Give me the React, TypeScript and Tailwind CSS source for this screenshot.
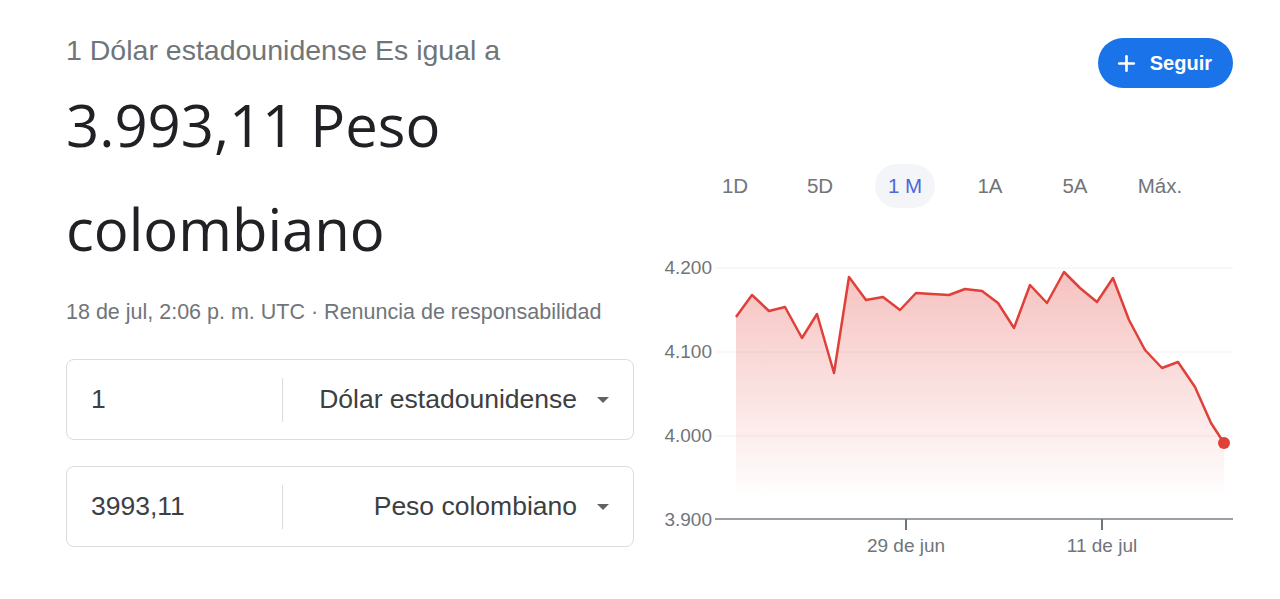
import { Plus } from "lucide-react";

const points: [number, number][] = [
  [736, 317], [752, 295], [769, 311], [785, 307], [802, 338], [817, 314],
  [834, 373], [849, 277], [866, 300], [883, 297], [900, 310], [916, 293],
  [932, 294], [949, 295], [965, 289], [982, 291], [998, 303], [1014, 328],
  [1030, 285], [1047, 303], [1064, 272], [1080, 288], [1097, 302], [1113, 278],
  [1129, 320], [1145, 350], [1162, 368], [1178, 362], [1195, 387], [1211, 423],
  [1224, 443],
];

const ranges = ["1D", "5D", "1 M", "1A", "5A", "Máx."];

const axisFont = "Liberation Sans, Arial, sans-serif";

function Chart() {
  const line = points.map(([x, y], i) => `${i ? "L" : "M"}${x} ${y}`).join(" ");
  const area = `${line} L1224 500 L736 500 Z`;
  const grid = [
    { y: 268, label: "4.200" },
    { y: 352, label: "4.100" },
    { y: 436, label: "4.000" },
  ];

  return (
    <svg width="580" height="310" viewBox="655 255 580 310" className="block">
      <defs>
        <linearGradient id="fill" x1="0" y1="0" x2="0" y2="1">
          <stop offset="0%" stopColor="#e0403a" stopOpacity="0.32" />
          <stop offset="100%" stopColor="#e0403a" stopOpacity="0" />
        </linearGradient>
      </defs>
      {grid.map((g) => (
        <g key={g.label}>
          <line x1="715" x2="1233" y1={g.y} y2={g.y} stroke="#f1f1f1" strokeWidth="1" />
          <text x="712" y={g.y + 6} textAnchor="end" fontSize="19" fill="#70757a" fontFamily={axisFont}>
            {g.label}
          </text>
        </g>
      ))}
      <path d={area} fill="url(#fill)" />
      <path d={line} fill="none" stroke="#e0403a" strokeWidth="2.5" strokeLinejoin="round" />
      <circle cx="1224" cy="443" r="6" fill="#e0403a" />
      <line x1="715" x2="1233" y1="519" y2="519" stroke="#9aa0a6" strokeWidth="2" />
      <text x="712" y="526" textAnchor="end" fontSize="19" fill="#70757a" fontFamily={axisFont}>
        3.900
      </text>
      {[
        { x: 906, label: "29 de jun" },
        { x: 1102, label: "11 de jul" },
      ].map((t) => (
        <g key={t.label}>
          <line x1={t.x} x2={t.x} y1="519" y2="530" stroke="#70757a" strokeWidth="2" />
          <text x={t.x} y="552" textAnchor="middle" fontSize="19" fill="#70757a" fontFamily={axisFont}>
            {t.label}
          </text>
        </g>
      ))}
    </svg>
  );
}

function CurrencyBox({ amount, currency }: { amount: string; currency: string }) {
  return (
    <div className="flex h-[81px] items-center rounded-[8px] border border-[#dadce0]">
      <div className="w-[215px] pl-[24px] text-[26.5px] text-[#3c4043]">{amount}</div>
      <div className="h-[44px] w-px bg-[#dadce0]" />
      <div className="flex flex-1 items-center justify-end pr-[24px] text-[26.5px] text-[#3c4043]">
        <span>{currency}</span>
        <span className="ml-[20px] h-0 w-0 border-x-[6px] border-t-[6px] border-x-transparent border-t-[#5f6368]" />
      </div>
    </div>
  );
}

export default function App() {
  return (
    <div className="flex h-[599px] w-[1280px] bg-white pl-[66px] [font-family:'Liberation_Sans',Arial,sans-serif]">
      <div className="w-[568px] pt-[35px]">
        <div className="text-[28.5px] leading-[30px] text-[#70757a]">1 Dólar estadounidense Es igual a</div>
        <div className="mt-[8px] text-[58px] leading-[104px] text-[#202124] [font-family:'Open_Sans',sans-serif]">
          3.993,11 Peso colombiano
        </div>
        <div className="mt-[19px] text-[21.5px] leading-[24px] text-[#70757a]">
          18 de jul, 2:06 p. m. UTC · Renuncia de responsabilidad
        </div>
        <div className="mt-[35px] flex flex-col gap-[26px]">
          <CurrencyBox amount="1" currency="Dólar estadounidense" />
          <CurrencyBox amount="3993,11" currency="Peso colombiano" />
        </div>
      </div>
      <div className="ml-[21px] w-[580px]">
        <div className="flex justify-end pr-[2px] pt-[38px]">
          <button className="flex h-[50px] items-center rounded-full bg-[#1a73e8] pl-[16px] pr-[21px] text-[20px] font-bold text-white">
            <Plus size={25} strokeWidth={2.5} className="mr-[11px]" />
            Seguir
          </button>
        </div>
        <div className="mt-[76px] flex pl-[50px]">
          {ranges.map((r) => (
            <div
              key={r}
              className={`mr-[25px] flex h-[44px] w-[60px] items-center justify-center rounded-full text-[20.5px] ${
                r === "1 M" ? "bg-[#f3f5f8] text-[#4b68d6]" : "text-[#70757a]"
              }`}
            >
              {r}
            </div>
          ))}
        </div>
        <div className="mt-[47px]">
          <Chart />
        </div>
      </div>
    </div>
  );
}
